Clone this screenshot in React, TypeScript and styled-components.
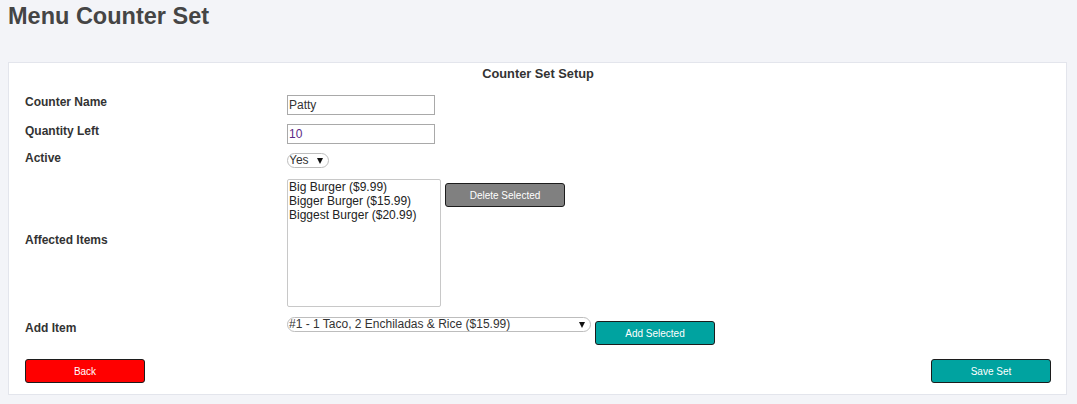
import React from "react";
import styled, { createGlobalStyle } from "styled-components";

const Global = createGlobalStyle`
  html, body { margin: 0; padding: 0; background: #f3f4f8; }
  body { font-family: "Liberation Sans", Arial, sans-serif; color: #333; }
  * { box-sizing: border-box; }
`;

const Page = styled.div`
  padding: 2px 10px 8px 8px;
`;

const Title = styled.h1`
  margin: 0;
  font-size: 23.5px;
  line-height: 28px;
  font-weight: bold;
  color: #454545;
`;

const Panel = styled.div`
  margin-top: 32px;
  background: #fff;
  border: 1px solid #e3e5ec;
  padding: 3px 15px 11px 16px;
  display: flex;
  flex-direction: column;
`;

const PanelHeading = styled.div`
  text-align: center;
  font-size: 12.8px;
  line-height: 15px;
  font-weight: bold;
  color: #333;
  margin-bottom: 14px;
`;

const Row = styled.div<{ $gap?: number }>`
  display: flex;
  align-items: center;
  margin-top: ${(p) => p.$gap ?? 0}px;
`;

const Label = styled.label`
  width: 262px;
  flex: none;
  font-size: 12px;
  line-height: 14px;
  font-weight: bold;
  color: #333;
  margin: -3px 0 3px 0;
`;

const TextInput = styled.input<{ $purple?: boolean }>`
  width: 148px;
  height: 20px;
  border: 1px solid #a9a9a9;
  padding: 0 1px;
  font-family: "Liberation Sans", Arial, sans-serif;
  font-size: 12px;
  color: ${(p) => (p.$purple ? "#5b2a86" : "#333")};
  background: #fff;
  outline: none;
`;

const SelectWrap = styled.div<{ $width: number }>`
  position: relative;
  width: ${(p) => p.$width}px;
  height: 15px;
  flex: none;
  &::after {
    content: "";
    position: absolute;
    right: 6px;
    top: 5px;
    border-left: 3.5px solid transparent;
    border-right: 3.5px solid transparent;
    border-top: 6px solid #111;
    pointer-events: none;
  }
`;

const PillSelect = styled.select`
  appearance: none;
  -webkit-appearance: none;
  display: block;
  width: 100%;
  height: 15px;
  border: 1px solid #bdbdbd;
  border-radius: 8px;
  background: #fff;
  padding: 0 14px 0 1px;
  margin: 0;
  font-family: "Liberation Sans", Arial, sans-serif;
  font-size: 12px;
  line-height: 13px;
  color: #333;
  outline: none;
`;

const ListBox = styled.select`
  display: block;
  width: 154px;
  height: 128px;
  border: 1px solid #c8c8c8;
  padding: 0;
  margin: 0;
  font-family: "Liberation Sans", Arial, sans-serif;
  font-size: 12px;
  color: #222;
  background: #fff;
  outline: none;
  overflow: hidden;
  option {
    padding: 0 1px;
    line-height: 14px;
    min-height: 14px;
  }
`;

const Button = styled.button<{ $bg: string }>`
  width: 120px;
  height: 24px;
  flex: none;
  border: 1px solid #1c1c1c;
  border-radius: 3px;
  background: ${(p) => p.$bg};
  color: #fff;
  font-family: "Liberation Sans", Arial, sans-serif;
  font-size: 10px;
  padding: 0;
  cursor: pointer;
`;

const SideButton = styled(Button)`
  margin-left: 4px;
  margin-top: 4px;
`;

const Field = styled.div`
  display: flex;
  align-items: flex-start;
`;

const Footer = styled.div`
  display: flex;
  justify-content: space-between;
  margin-top: 14px;
`;

export default function App() {
  return (
    <>
      <Global />
      <Page>
        <Title>Menu Counter Set</Title>
        <Panel>
          <PanelHeading>Counter Set Setup</PanelHeading>
          <Row>
            <Label>Counter Name</Label>
            <TextInput defaultValue="Patty" />
          </Row>
          <Row $gap={9}>
            <Label>Quantity Left</Label>
            <TextInput $purple defaultValue="10" />
          </Row>
          <Row $gap={9}>
            <Label>Active</Label>
            <SelectWrap $width={42}>
              <PillSelect defaultValue="Yes">
                <option>Yes</option>
                <option>No</option>
              </PillSelect>
            </SelectWrap>
          </Row>
          <Row $gap={11}>
            <Label>Affected Items</Label>
            <Field>
              <ListBox multiple size={8}>
                <option>Big Burger ($9.99)</option>
                <option>Bigger Burger ($15.99)</option>
                <option>Biggest Burger ($20.99)</option>
              </ListBox>
              <SideButton $bg="#808080">Delete Selected</SideButton>
            </Field>
          </Row>
          <Row $gap={10}>
            <Label>Add Item</Label>
            <Field>
              <SelectWrap $width={304}>
                <PillSelect>
                  <option>#1 - 1 Taco, 2 Enchiladas &amp; Rice ($15.99)</option>
                </PillSelect>
              </SelectWrap>
              <SideButton $bg="#00a3a0">Add Selected</SideButton>
            </Field>
          </Row>
          <Footer>
            <Button $bg="#ff0000">Back</Button>
            <Button $bg="#00a3a0">Save Set</Button>
          </Footer>
        </Panel>
      </Page>
    </>
  );
}
